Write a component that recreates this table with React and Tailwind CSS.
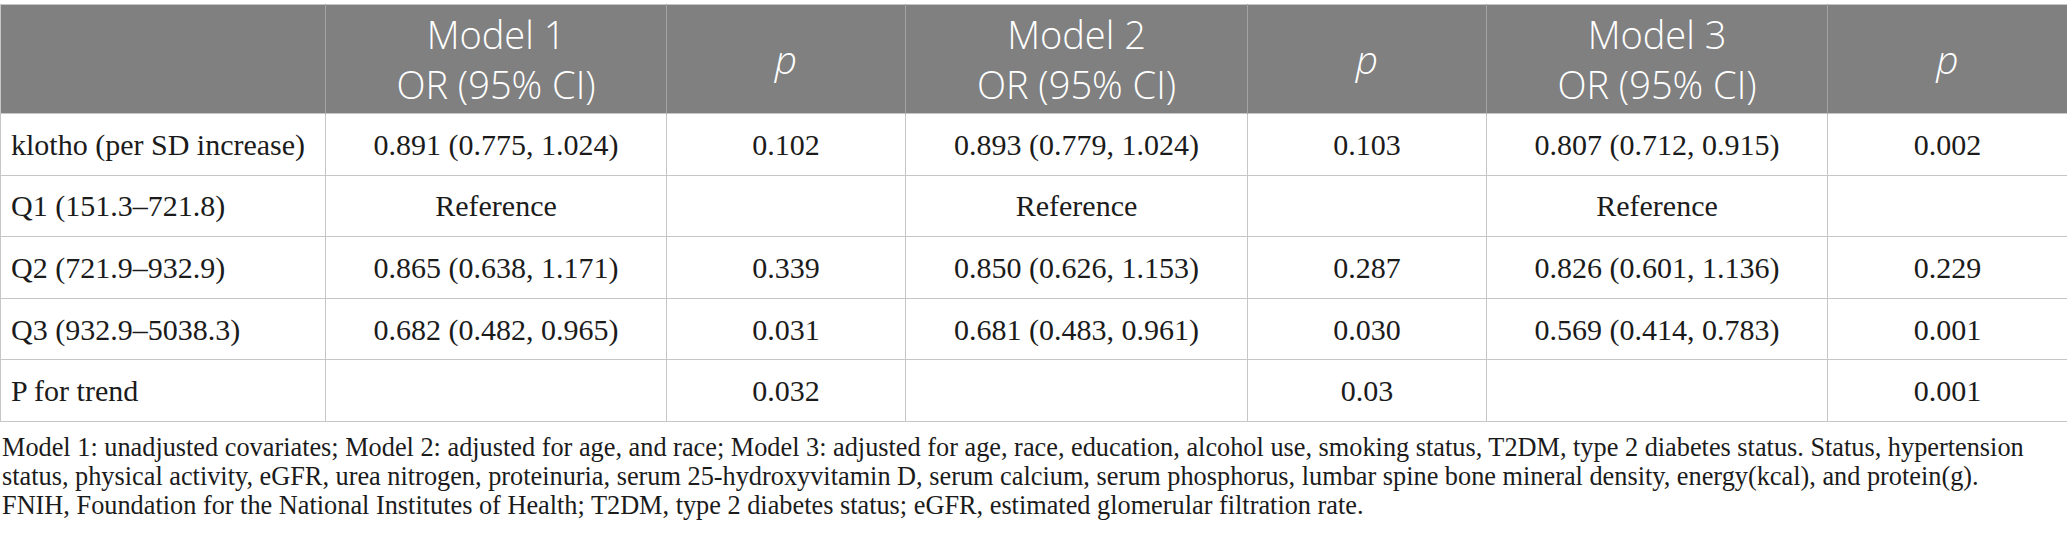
import React from "react";

const models = [
  { label: "klotho (per SD increase)", cells: ["0.891 (0.775, 1.024)", "0.102", "0.893 (0.779, 1.024)", "0.103", "0.807 (0.712, 0.915)", "0.002"] },
  { label: "Q1 (151.3–721.8)", cells: ["Reference", "", "Reference", "", "Reference", ""] },
  { label: "Q2 (721.9–932.9)", cells: ["0.865 (0.638, 1.171)", "0.339", "0.850 (0.626, 1.153)", "0.287", "0.826 (0.601, 1.136)", "0.229"] },
  { label: "Q3 (932.9–5038.3)", cells: ["0.682 (0.482, 0.965)", "0.031", "0.681 (0.483, 0.961)", "0.030", "0.569 (0.414, 0.783)", "0.001"] },
  { label: "P for trend", cells: ["", "0.032", "", "0.03", "", "0.001"] },
];

const notes = [
  "Model 1: unadjusted covariates; Model 2: adjusted for age, and race; Model 3: adjusted for age, race, education, alcohol use, smoking status, T2DM, type 2 diabetes status. Status, hypertension",
  "status, physical activity, eGFR, urea nitrogen, proteinuria, serum 25-hydroxyvitamin D, serum calcium, serum phosphorus, lumbar spine bone mineral density, energy(kcal), and protein(g).",
  "FNIH, Foundation for the National Institutes of Health; T2DM, type 2 diabetes status; eGFR, estimated glomerular filtration rate.",
];

const HeadModel = ({ n }) => (
  <th className="border-x border-[#a3a3a3] font-light text-white text-[38px] leading-[50px] text-center align-middle">
    <div>Model {n}</div>
    <div>OR (95% CI)</div>
  </th>
);

const HeadP = () => (
  <th className="border-x border-[#a3a3a3] font-light italic text-white text-[39px] text-center align-middle">p</th>
);

export default function App() {
  return (
    <div className="w-[2067px] h-[549px] bg-white pt-[4px] overflow-hidden">
      <table className="w-[2067px] table-fixed border-collapse border border-[#c6c6c6]">
        <colgroup>
          <col className="w-[325px]" />
          <col className="w-[341px]" />
          <col className="w-[239px]" />
          <col className="w-[342px]" />
          <col className="w-[239px]" />
          <col className="w-[341px]" />
          <col className="w-[240px]" />
        </colgroup>
        <thead>
          <tr className="h-[109px] bg-[#7f807f] font-['Open_Sans',sans-serif]">
            <th className="border-r border-[#a3a3a3]" />
            <HeadModel n={1} />
            <HeadP />
            <HeadModel n={2} />
            <HeadP />
            <HeadModel n={3} />
            <HeadP />
          </tr>
        </thead>
        <tbody className="font-['Liberation_Serif',serif] text-[30px] text-[#1b1b1b]">
          {models.map((row) => (
            <tr key={row.label} className="h-[61.6px]">
              <td className="border border-[#c6c6c6] pl-[10px] whitespace-nowrap">{row.label}</td>
              {row.cells.map((c, i) => (
                <td key={i} className="border border-[#c6c6c6] text-center whitespace-nowrap">{c}</td>
              ))}
            </tr>
          ))}
        </tbody>
      </table>
      <div className="mt-[11px] pl-[2px] font-['Liberation_Serif',serif] text-[26.3px] leading-[29px] text-[#1b1b1b]">
        {notes.map((line) => (
          <div key={line} className="whitespace-nowrap">{line}</div>
        ))}
      </div>
    </div>
  );
}
